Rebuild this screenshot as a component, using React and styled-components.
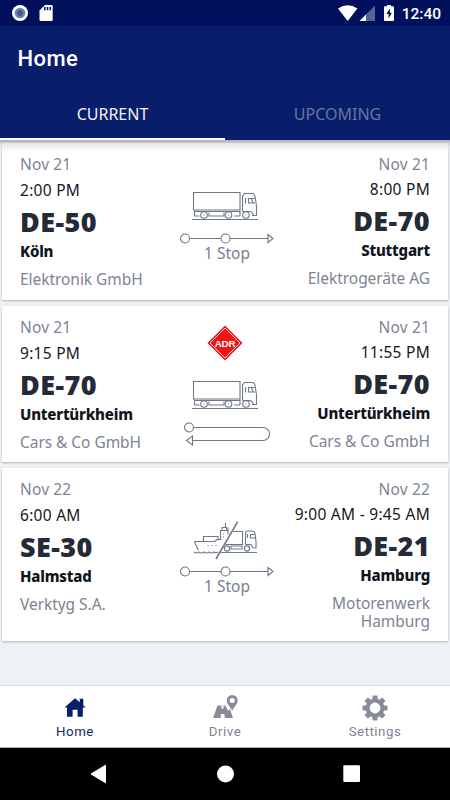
import React from 'react';
import styled, { createGlobalStyle } from 'styled-components';

const trips = [
  {
    id: 1,
    height: 157,
    vehicle: 'truck',
    route: 'stop',
    from: { date: 'Nov 21', time: '2:00 PM', code: 'DE-50', city: 'Köln', company: 'Elektronik GmbH' },
    to: { date: 'Nov 21', time: '8:00 PM', code: 'DE-70', city: 'Stuttgart', company: 'Elektrogeräte AG' },
  },
  {
    id: 2,
    height: 156,
    vehicle: 'truck',
    route: 'return',
    adr: true,
    from: { date: 'Nov 21', time: '9:15 PM', code: 'DE-70', city: 'Untertürkheim', company: 'Cars & Co GmbH' },
    to: { date: 'Nov 21', time: '11:55 PM', code: 'DE-70', city: 'Untertürkheim', company: 'Cars & Co GmbH' },
  },
  {
    id: 3,
    height: 173,
    vehicle: 'ferry',
    route: 'stop',
    from: { date: 'Nov 22', time: '6:00 AM', code: 'SE-30', city: 'Halmstad', company: 'Verktyg S.A.' },
    to: { date: 'Nov 22', time: '9:00 AM - 9:45 AM', code: 'DE-21', city: 'Hamburg', company: 'Motorenwerk Hamburg' },
  },
];

const StatusIcons = () => (
  <>
    <svg width="42" height="18" viewBox="0 0 42 18">
      <circle cx="8" cy="9" r="8" fill="#fff" />
      <circle cx="8" cy="9" r="4.1" fill="#46569a" stroke="#7380b3" strokeWidth="2.4" />
      <path d="M33 1h6.700q1 0 1 1v14q0 1-1 1H28.500q-1 0-1-1V6.500z" fill="#fff" />
      <path d="M32.800 3v3.200M35.500 3v3.200M38.200 3v3.200" stroke="#00105d" strokeWidth="1.500" />
    </svg>
    <StatusRight>
      <svg width="57" height="18" viewBox="0 0 57 18">
        <path d="M0 4.500Q9.600-2.200 19.400 4.500L9.700 17z" fill="#fff" />
        <path d="M37 1.500V17H21.500z" fill="#56629a" />
        <path d="M28 10.500V17h-6.500z" fill="#fff" />
        <path d="M49 1h4v1.300h2q1 0 1 1V16q0 1-1 1h-8q-1 0-1-1V3.300q0-1 1-1h2z" fill="#fff" />
        <path d="M52 4.500l-3.600 5.600h2.200V14.500l3.300-5.800h-2z" fill="#00105d" />
      </svg>
      <Clock>12:40</Clock>
    </StatusRight>
  </>
);

const Truck = () => (
  <Drawing width="70" height="30" viewBox="0 0 70 30">
    <path d="M1.500 2.500H48v17.500H1.500zM2 21.500h46" />
    <path d="M2.500 22.500v3.500h5M17 22.500v3.500h15V22.500M42 26h6M50.500 21.500V6l2-2.500H60q2.500 0 3 2.500l1.500 10v9.500h-4.500M50.500 21.500h7q3 0 4 4" />
    <path d="M53.500 8v5.500M62.500 8.500h-6V13h6.500M59.500 8.500l1.500 4.500M2.500 20.500v2M48 20.500V26" />
    <circle cx="12" cy="25" r="3.300" />
    <circle cx="36.500" cy="25" r="3.300" />
    <circle cx="54" cy="25" r="3.300" />
    <path d="M11.500 25h1M36 25h1M53.500 25h1M0 29.500h66" />
  </Drawing>
);

const FerryTruck = () => (
  <Drawing width="70" height="38" viewBox="0 0 70 38">
    <g transform="translate(0 5)">
      <path d="M2.300 21.500h20.200L25 19.500h4.500M2.300 21.500l4 8.500M11.500 21v-4.500H26v4" />
      <path d="M28.500 19V10.500h7.500v4M30 10V7.500h4.500V10M33.500 7V3M36 7.500v3M31 14h1M31 17h1M15.500 25.500h1M19.500 25.500h1M23.500 25.500h1" />
      <path d="M2 32q2.500 2 5 0q2.500 2 5 0q2.500 2 5 0q2.500 2 5 0q2 1.500 4 0" />
      <path d="M41 11.500h9.500v13H33.500M53.500 24.500V13q0-2 2-2H60q2.500 0 3 2.500l1 8V28h-2.500M53.500 24.500H59l2 3.500" />
      <path d="M62.500 14.500h-4v3.500h5M55.500 14v4M39 26v3h11v-3z" />
      <circle cx="35" cy="28.500" r="2.600" />
      <circle cx="55" cy="28.500" r="2.600" />
      <path d="M28 32.500h37" />
      <path d="M45.700 1.700L24 39" strokeWidth="1.600" />
    </g>
  </Drawing>
);

const StopRoute = () => (
  <Drawing width="96" height="12" viewBox="0 0 96 12">
    <circle cx="6" cy="6.500" r="4.500" />
    <circle cx="46.500" cy="6.500" r="4.500" />
    <path d="M10.500 6.500H42M51 6.500H89M89 2.500v8l5-4z" />
  </Drawing>
);

const ReturnRoute = () => (
  <Drawing width="88" height="25" viewBox="0 0 88 25">
    <circle cx="6" cy="6.500" r="4.500" />
    <path d="M10.500 6.500H80a6.500 6.500 0 0 1 0 13H9.500M9.500 15v9l-6-4.500z" />
  </Drawing>
);

const Adr = () => (
  <svg width="36" height="36" viewBox="0 0 36 36">
    <path d="M18 .5L35.500 18 18 35.500.5 18z" fill="#ee1515" />
    <path d="M18 3L33 18 18 33 3 18z" fill="none" stroke="#fff" strokeWidth=".8" />
    <text
      x="18"
      y="21.800"
      textAnchor="middle"
      fill="#fff"
      fontFamily="Liberation Sans, sans-serif"
      fontWeight="700"
      fontSize="9.800"
      letterSpacing="-.3"
    >
      ADR
    </text>
  </svg>
);

const HomeIcon = () => (
  <svg width="26" height="26" viewBox="0 0 26 26">
    <path d="M13 3.300l4.800 4V4.500l-.7-.7h4.200v6.500l2.300 2.200h-2.800v9.200h-5.200v-7h-5v7H5V12.500H2.500z" fill="#071e6b" />
  </svg>
);

const DriveIcon = () => (
  <svg width="26" height="26" viewBox="0 0 26 26">
    <path
      d="M5.500 10.500h4.200l-.3 3h2.200l-.2-3h1.800l3 5.500 1.500-2.500 3.300 9.500h-8.200l-.5-4H9l-.5 4H1z"
      fill="#878c98"
    />
    <path
      d="M20.200 0a5.500 5.500 0 0 1 5.500 5.500c0 3.500-3.300 6-5.500 10.200-2.200-4.200-5.500-6.700-5.500-10.200A5.500 5.500 0 0 1 20.200 0zm0 3a2.500 2.500 0 1 0 0 5 2.500 2.500 0 0 0 0-5z"
      fill="#878c98"
      fillRule="evenodd"
    />
  </svg>
);

const SettingsIcon = () => (
  <svg width="26" height="26" viewBox="-13 -13 26 26">
    <circle r="7.400" fill="none" stroke="#878c98" strokeWidth="4" />
    {[0, 45, 90, 135, 180, 225, 270, 315].map(angle => (
      <path key={angle} d="M-2.800-8L-2.300-12.500h4.600L2.800-8z" fill="#878c98" transform={`rotate(${angle})`} />
    ))}
  </svg>
);

const Place = ({ place, right }) => (
  <PlaceColumn $right={right}>
    <DateText>{place.date}</DateText>
    <TimeText>{place.time}</TimeText>
    <Code>{place.code}</Code>
    <City>{place.city}</City>
    <Company>{place.company}</Company>
  </PlaceColumn>
);

const Trip = ({ trip }) => (
  <Card $height={trip.height}>
    <Place place={trip.from} />
    <Transport>
      {trip.adr && (
        <AdrSlot>
          <Adr />
        </AdrSlot>
      )}
      <VehicleSlot>{trip.vehicle === 'truck' ? <Truck /> : <FerryTruck />}</VehicleSlot>
      {trip.route === 'stop' ? (
        <>
          <StopRoute />
          <StopText>1 Stop</StopText>
        </>
      ) : (
        <ReturnRoute />
      )}
    </Transport>
    <Place place={trip.to} right />
  </Card>
);

const App = () => (
  <Screen>
    <GlobalStyle />
    <StatusBar>
      <StatusIcons />
    </StatusBar>
    <Header>
      <Title>Home</Title>
      <Tabs>
        <Tab $active>CURRENT</Tab>
        <Tab>UPCOMING</Tab>
      </Tabs>
    </Header>
    <List>
      {trips.map(trip => (
        <Trip key={trip.id} trip={trip} />
      ))}
    </List>
    <BottomNav>
      <NavItem $active>
        <HomeIcon />
        Home
      </NavItem>
      <NavItem>
        <DriveIcon />
        Drive
      </NavItem>
      <NavItem>
        <SettingsIcon />
        Settings
      </NavItem>
    </BottomNav>
    <SystemBar>
      <svg width="18" height="20" viewBox="0 0 18 20">
        <path d="M15.500 1.200v17.600L1 10z" fill="#fff" stroke="#fff" strokeLinejoin="round" />
      </svg>
      <svg width="18" height="20" viewBox="-.5 0 18 20">
        <circle cx="8" cy="10" r="8.500" fill="#fff" />
      </svg>
      <svg width="18" height="20" viewBox="0 0 18 20">
        <rect x=".3" y="1.300" width="16.700" height="16.700" rx="1" fill="#fff" />
      </svg>
    </SystemBar>
  </Screen>
);

const GlobalStyle = createGlobalStyle`
  * {
    box-sizing: border-box;
  }
  body {
    margin: 0;
    overflow: hidden;
  }
  svg {
    display: block;
    flex: none;
  }
`;

const Screen = styled.div`
  display: flex;
  flex-direction: column;
  width: 450px;
  height: 800px;
  background: #eef2f5;
  font-family: 'Noto Sans', sans-serif;
`;

const StatusBar = styled.div`
  display: flex;
  justify-content: space-between;
  height: 26px;
  padding: 4px 9px 0 12px;
  background: #00105d;
`;
const StatusRight = styled.div`
  display: flex;
  gap: 7px;
`;
const Clock = styled.span`
  color: #fff;
  font: 500 15.500px/20px Roboto, sans-serif;
`;

const Header = styled.header`
  height: 114px;
  background: #081e6b;
`;
const Title = styled.h1`
  height: 64px;
  margin: 0;
  padding-left: 17.500px;
  color: #fff;
  font: 500 22px/65px Roboto, sans-serif;
  letter-spacing: 0.400px;
`;
const Tabs = styled.nav`
  display: flex;
  height: 50px;
`;
const Tab = styled.div`
  flex: 1;
  border-bottom: 2px solid ${props => (props.$active ? '#fff' : '#081e6b')};
  color: ${props => (props.$active ? '#f1f1f3' : '#68749f')};
  font-size: 16px;
  line-height: 49px;
  text-align: center;
`;

const List = styled.main`
  display: flex;
  flex: 1;
  flex-direction: column;
  gap: 6px;
  padding: 3px 2px 0;
  background: linear-gradient(#a9adb1, #eef2f5 6px);
`;
const Card = styled.article`
  display: grid;
  grid-template-columns: 160px 94px 1fr;
  height: ${props => props.$height}px;
  padding: 0 18px;
  background: #fff;
  box-shadow: 0 1px 2px #aeb3b8;
  &:first-child {
    background: linear-gradient(#e4e5e6, #fff 9px);
  }
`;

const PlaceColumn = styled.div`
  padding-top: 11px;
  text-align: ${props => (props.$right ? 'right' : 'left')};
  ${props => props.$right && 'div:nth-child(2) { margin-top: 4px; }'}
`;
const DateText = styled.div`
  height: 20px;
  color: #7d8492;
  font-size: 15.500px;
  letter-spacing: 0.150px;
  line-height: 20px;
`;
const TimeText = styled.div`
  margin-top: 5px;
  color: #15181d;
  font-size: 15.500px;
  letter-spacing: 0.280px;
  line-height: 22px;
  white-space: nowrap;
`;
const Code = styled.div`
  margin-top: 3px;
  color: #242a36;
  font-size: 27px;
  font-weight: 900;
  letter-spacing: 0.400px;
  line-height: 36px;
`;
const City = styled.div`
  margin-top: 1px;
  color: #10141c;
  font-size: 15px;
  font-weight: 800;
  letter-spacing: -0.200px;
  line-height: 20px;
`;
const Company = styled.div`
  margin-top: 9px;
  color: #7d8492;
  font-size: 15.500px;
  letter-spacing: -0.050px;
  line-height: 18.300px;
`;

const Drawing = styled.svg`
  fill: none;
  overflow: visible;
  stroke: #6f7788;
  stroke-width: 1.100;
`;
const Transport = styled.div`
  display: flex;
  flex-direction: column;
  align-items: center;
  justify-content: center;
`;
const AdrSlot = styled.div`
  margin: 3px 4px 9px 0;
`;
const VehicleSlot = styled.div`
  display: flex;
  align-items: flex-end;
  height: 39px;
  margin-bottom: 12px;
`;
const StopText = styled.div`
  height: 18px;
  color: #79808f;
  font-size: 15.500px;
  line-height: 19px;
`;

const BottomNav = styled.nav`
  display: flex;
  height: 62px;
  border-bottom: 1px solid #b5b5b5;
  background: #fff;
  box-shadow: 0 -1px 1px #dfe3e6;
`;
const NavItem = styled.div`
  display: flex;
  flex: 1;
  flex-direction: column;
  align-items: center;
  padding-top: 9px;
  color: ${props => (props.$active ? '#142765' : '#7d8492')};
  font: 400 13.300px/22px Roboto, sans-serif;
  letter-spacing: 0.500px;
`;
const SystemBar = styled.footer`
  display: flex;
  align-items: center;
  justify-content: space-between;
  height: 52px;
  padding: 0 89px 0 90px;
  background: #000;
`;

export default App;
